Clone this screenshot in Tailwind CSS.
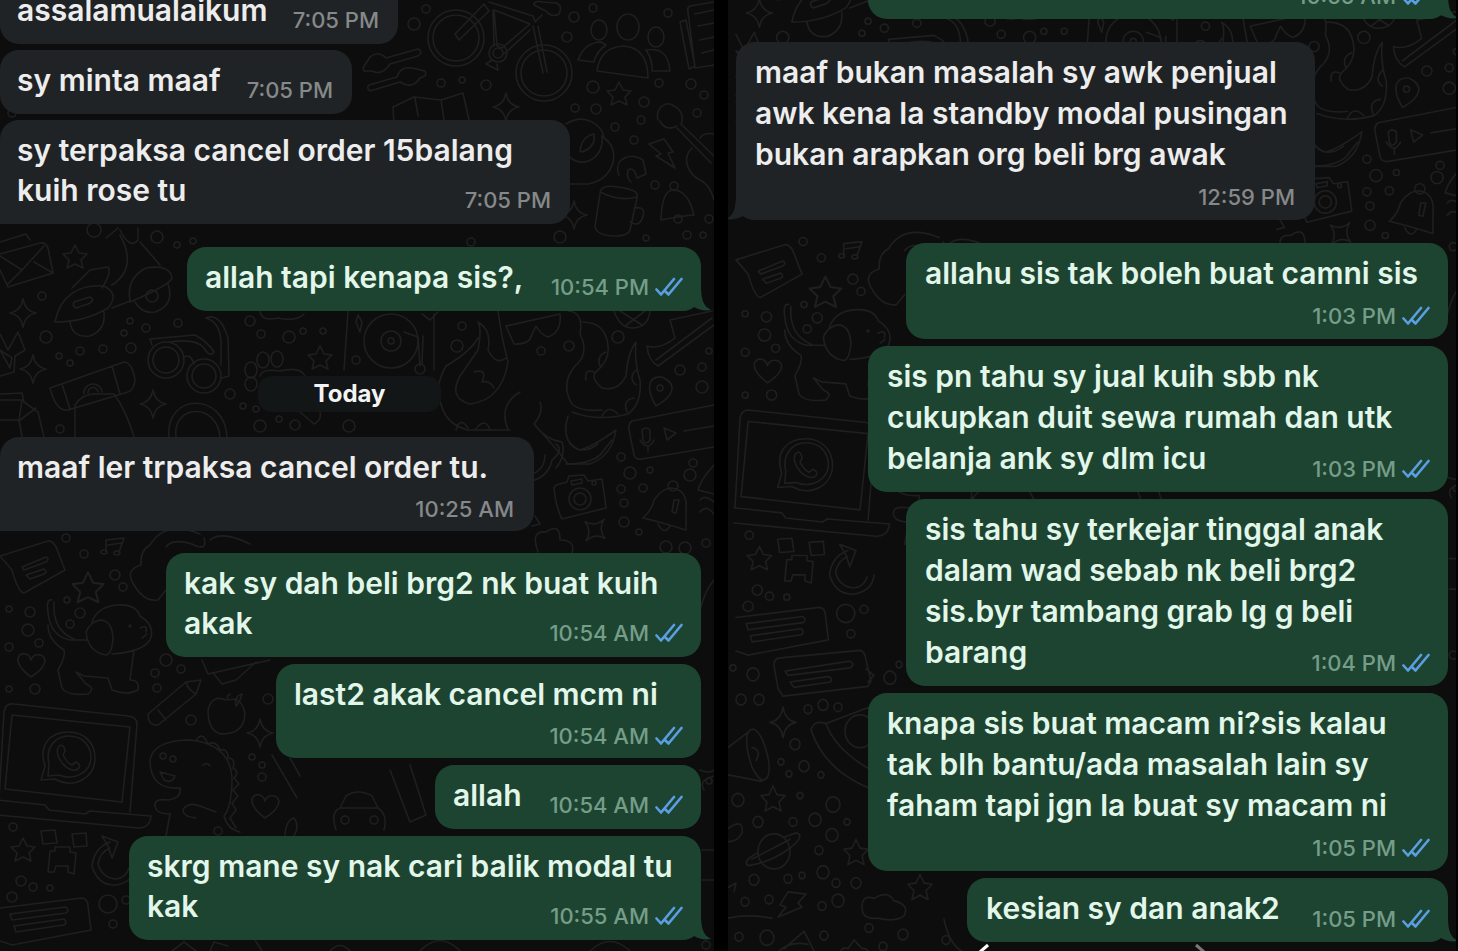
<!DOCTYPE html>
<html lang="ms">
<head>
<meta charset="utf-8">
<meta name="viewport" content="width=device-width, initial-scale=1">
<title>Chat</title>
<script src="https://cdn.jsdelivr.net/npm/@tailwindcss/browser@4"></script>
</head>
<body class="bg-black font-['Inter',sans-serif] font-semibold">

<!-- Shared drawings -->
<svg class="hidden" aria-hidden="true">
  <symbol id="ticks" viewBox="0 0 28 20">
    <path d="M1.5 12.5 L6 17.5 L19 2 M10.500 14.500 L13.500 17.500 L26.500 2" fill="none" stroke="#5b9fe3" stroke-width="2.600" stroke-linecap="round" stroke-linejoin="round"/>
  </symbol>
  <symbol id="tail-out" viewBox="0 0 30 26">
    <path d="M10 0 H20 C20 14 22 21 30 25 C24 26 18 25 13 22 C9 25 5 26 0 26 Z" fill="#1d4431"/>
  </symbol>
  <symbol id="tail-in" viewBox="0 0 30 26">
    <path d="M20 0 H10 C10 14 8 21 0 25 C6 26 12 25 17 22 C21 25 25 26 30 26 Z" fill="#202325"/>
  </symbol>
  <defs>
    <path id="star" d="M0 -12 L4 -4 L12 -3 L6 3 L8 11 L0 7 L-8 11 L-6 3 L-12 -3 L-4 -4 Z"/>
    <path id="spark" d="M0 -14 Q2 -2 13 0 Q2 2 0 14 Q-2 2 -13 0 Q-2 -2 0 -14 Z"/>
    <path id="heart" d="M0 12 C-8 6 -14 0 -13 -7 C-10 -14 -2 -12 0 -5 C2 -12 12 -12 14 -5 C14 1 8 7 0 12 Z"/>
    <g id="laptop">
      <path d="M-1 800 L4 712 Q5 703 14 704 L128 716 Q137 717 137 724 L130 812"/>
      <path d="M12 715 L130 727 L122 802 L5 789 Z"/>
      <path d="M-2 800 L45 805 L49 810 L85 814 L90 811 L151 816 Q150 828 138 828 L-2 815"/>
      <path d="M45 766 C38 745 50 732 69 732 C84 732 95 743 95 758 C95 777 75 790 55 779 L41 780 Z"/>
      <path d="M49 764 C45 748 55 736 69 736 C83 736 91 746 91 758 C90 773 74 781 59 775 L48 776 Z"/>
      <path d="M58 748 C60 744 64 744 65 751 L63 755 Q67 763 72 765 L76 762 Q82 765 78 769 C69 775 54 757 58 748 Z"/>
    </g>
    <g id="wallpaper" fill="none" stroke="#1f1f1f" stroke-width="1.600" stroke-linecap="round" stroke-linejoin="round">
      <!-- bicycle -->
      <circle cx="456" cy="38" r="28"/><circle cx="456" cy="38" r="23"/>
      <circle cx="544" cy="73" r="28"/><circle cx="544" cy="73" r="23"/>
      <path d="M455 34 L484 4 L489 11 L459 40 Z M489 2 L533 16 L535 22 L542 15 M494 10 L530 24 L502 48 L497 46 Z M530 30 L504 54 M493 10 L494 46 M533 26 L543 73 M538 26 L547 72 M534 5 Q534 0 543 2 L556 3 Q563 5 559 14 Q552 18 546 11 Z"/>
      <circle cx="498" cy="53" r="5"/><circle cx="498" cy="53" r="9"/><path d="M492 60 L486 64 L498 70 L497 64"/>
      <!-- people -->
      <ellipse cx="599" cy="30" rx="8" ry="10"/><ellipse cx="628" cy="27" rx="11" ry="13"/><ellipse cx="656" cy="37" rx="8" ry="10"/>
      <path d="M597 71 Q600 47 624 46 Q648 48 648 78 Z M578 60 Q585 42 601 42 L606 45 Q596 52 594 62 Z M646 50 Q668 46 670 71 L652 71 Q653 60 646 50 Z"/>
      <!-- notebook, sliders, folded map -->
      <path d="M714 2 L690 6 Q687 7 688 12 L695 68 L714 65 M680 22 L686 20 L695 66 L689 69 Z M695 14 L714 10 M698 26 L714 23 M700 40 L714 37 M702 53 L714 50"/>
      <path d="M363 68 L370 57 Q378 50 386 58 L418 49 Q424 52 418 56 L390 64 Q382 76 372 71 L364 71 Z M369 85 L397 77 Q400 66 412 68 L425 71 Q428 76 420 78 Q412 90 400 82 L370 91 Q366 88 369 85 Z"/>
      <path d="M394 125 L393 107 L414 97 L441 100 L463 93 L469 120 M415 98 L418 116 M441 100 L444 120"/>
      <!-- avocado, lightning, guitar, cashew, mug, bell -->
      <path d="M566 124 C585 112 602 125 604 138 C622 150 614 180 588 184 L566 184 M566 152 C578 172 605 160 602 136"/><path d="M580 151 Q582 136 594 134 Q596 147 582 152 Z"/>
      <path d="M649 144 L664 139 L673 152 L668 153 L675 168 L656 156 L661 154 Z"/>
      <path d="M658 120 C655 108 666 100 674 106 C682 110 684 118 681 124 L714 156 M677 128 L711 163 M660 121 Q666 132 677 126 M714 134 Q704 132 700 138 M692 148 C680 160 690 176 702 181 Q710 186 714 200"/>
      <path d="M619 175 C612 157 634 152 643 160 L646 174 L637 178 Q634 166 628 170 Q626 178 631 182 M600 192 Q602 184 618 187 Q640 190 637 197 Q620 202 600 192 M600 194 L595 226 Q596 236 616 236 Q628 236 630 230 L637 198 M634 208 Q646 206 643 216 Q640 228 630 222"/>
      <path d="M661 220 Q662 190 673 190 Q688 190 694 215 Q680 216 661 220 Z"/><circle cx="674" cy="186" r="4"/><circle cx="678" cy="219" r="4"/>
      <!-- envelope, scooter, rocket -->
      <path d="M0 254 L40 243 Q46 242 48 248 L53 273 L8 287 L0 270 M0 242 L26 234 L30 240 M0 256 L22 270 L44 246 M22 270 L8 284 M34 262 L53 273"/>
      <path d="M55 322 C60 295 80 284 104 286 Q120 294 108 308 Q85 322 55 322 Z M72 288 L90 270 L108 267 Q112 272 102 288 M74 302 L90 297 Q96 300 88 304 L76 308 Q72 306 74 302 Z M112 308 L130 301 Q126 278 146 268 Q170 264 172 278 Q170 285 130 302 M70 322 Q72 338 90 336 Q106 330 104 312 M168 284 Q175 305 155 312 Q142 314 135 302"/><circle cx="152" cy="296" r="6"/><path d="M120 235 Q138 268 112 285 M140 242 L160 265 M106 238 L118 228 M120 230 Q130 250 138 240 L138 228"/>
      <!-- sunglasses -->
      <circle cx="166" cy="360" r="18"/><circle cx="166" cy="360" r="13"/><circle cx="204" cy="376" r="17"/><circle cx="204" cy="376" r="12"/>
      <path d="M152 345 L150 339 L195 335 Q208 342 214 352 Q210 358 204 348 Q196 338 170 342 M183 358 Q190 352 194 364 M206 318 Q220 312 228 338 L229 376 L222 378 M206 318 Q220 322 221 342 L221 365"/>
      <!-- paw, cylinder, carton, reel -->
      <ellipse cx="251" cy="370" rx="6" ry="8"/><ellipse cx="263" cy="360" rx="6" ry="8"/><ellipse cx="277" cy="359" rx="6" ry="8"/><ellipse cx="251" cy="384" rx="6" ry="7"/><path d="M260 376 Q262 368 280 371 Q300 366 305 376"/>
      <path d="M50 388 L124 362 Q132 362 135 380 Q134 390 128 392 L68 410 Q56 412 50 388 Z M62 384 L70 409 M112 366 L120 394 M84 394 A9 9 0 1 1 102 392 M88 393 A5 5 0 1 1 98 392 M75 437 V405 Q80 396 92 394 L114 394 Q126 410 134 437 M0 394 L22 393 L24 402 L38 412 L44 437 M0 400 H22 L19 420 L22 437 M20 420 L36 408 M0 420 L18 420"/>
      <path d="M169 437 C165 392 225 392 227 437 M176 437 C172 404 217 402 220 437 M300 412 L314 424 Q322 420 320 412"/>
      <path d="M0 334 L8 350 L18 332 L25 350 L15 356 L14 372 L0 376 M0 350 L10 368 L12 358 Z"/>
      <!-- record player, tall screen -->
      <circle cx="391" cy="341" r="27"/><circle cx="391" cy="341" r="10"/><circle cx="391" cy="341" r="3"/><path d="M404 332 L418 337 L420 366 M423 336 L422 364"/><circle cx="420" cy="369" r="5"/>
      <path d="M348 311 L344 370 M434 314 V370 M358 315 L362 322 L360 332 L356 322 Z M260 311 Q262 322 278 318 Q296 322 304 314 M422 314 L430 320 L438 312"/>
      <!-- octopus wearing glasses -->
      <path d="M498 311 Q502 340 508 362 Q502 400 470 404 Q448 398 460 376 L478 350 Q482 328 478 322 Q492 330 488 350 Q496 366 506 358 M478 338 Q470 352 446 366 Q435 385 440 400 Q444 424 468 430 L510 430 M506 326 L560 314 Q562 332 548 337 Q540 334 536 326 L532 334 Q530 345 514 344 Z M568 311 Q584 312 580 334 Q590 354 575 366 Q560 384 572 404 Q580 412 602 410 M582 322 Q606 322 608 346 Q610 360 596 372 Q590 378 602 388 Q618 392 626 376 Q628 352 636 342 Q634 362 640 380 Q642 404 628 414 Q598 422 572 412 M568 416 Q560 442 580 450 Q594 446 616 430 Q612 456 590 464 L568 464 Q556 448 534 424 Q544 412 540 402 M520 392 Q498 405 508 430 M534 424 Q546 440 562 442 Q566 456 556 468 M456 430 Q460 416 468 428 M475 430 Q485 416 490 430 M474 372 Q488 368 482 382 Q490 380 494 388 M600 366 Q596 356 606 352 M586 380 Q584 368 594 372 M602 416 Q608 404 618 414 M636 385 Q628 378 636 370 M627 412 Q622 400 634 398"/>
      <!-- basketball, shoe, map pin, voice message -->
      <path d="M614 311 Q620 328 632 328 Q648 328 650 311 M620 311 L642 325 M645 311 L625 326 M670 320 L712 311 M670 320 L675 338 Q660 350 647 346 Q648 360 658 366 L714 325 M656 360 L712 318"/>
      <path d="M656 406 C644 386 650 376 662 377 C678 384 674 396 656 406 Z"/><circle cx="660" cy="388" r="3"/>
      <path d="M714 405 L632 421 Q628 424 629 430 L634 455 Q636 460 642 459 L714 447 M664 428 L676 433 L667 440 Z M684 431 L714 426 M642 430 Q646 426 650 430 L650 440 Q646 446 643 440 Z M640 440 Q648 452 654 440 M648 447 V452"/>
      <!-- camera, second bell, plants -->
      <path d="M556 485 L567 482 L569 476 L584 475 L588 481 L602 479 Q606 506 606 508 L562 519 Q556 508 554 488 Z M571 481 L582 479 V483 L572 485 Z"/><circle cx="580" cy="499" r="11"/><circle cx="580" cy="499" r="6"/><circle cx="594" cy="483" r="2"/>
      <path d="M643 518 Q652 510 654 500 Q662 488 672 488 Q688 490 686 510 L686 530 Q660 522 643 518 Z M674 500 L679 500 L676 513 L672 512 Z M658 524 Q664 536 670 526 M714 465 Q700 480 698 490 L714 494 M700 500 Q704 494 714 502 M700 512 Q706 504 714 514"/><circle cx="673" cy="486" r="5"/>
      <path d="M524 482 Q548 480 552 460 Q564 450 556 444 M530 475 Q545 470 545 455 M566 464 Q596 464 604 450 L612 440 M570 444 Q582 456 598 444 M538 552 Q530 530 546 532 Q560 522 560 540 Q576 540 572 553 M535 516 L540 524 L532 526"/>
      <!-- chat card, notes, koala -->
      <path d="M0 556 L48 541 Q54 540 58 552 L65 570 L24 593 Q18 592 12 570 Z M22 567 L46 557 Q50 559 46 562 L24 570 Z M26 575 L44 569 Q48 572 44 574 L30 579 Z"/>
      <path d="M106 552 V540 L124 538 L119 552 M108 545 L122 543"/><ellipse cx="104" cy="552" rx="3" ry="2"/><ellipse cx="117" cy="553" rx="3" ry="2"/>
      <path d="M166 547 Q172 538 192 544 Q208 552 204 538 M200 534 Q165 520 150 545 Q140 550 141 565 Q124 570 134 585 Q144 602 158 600 L166 590 M210 540 Q222 530 250 544"/>
      <!-- dog -->
      <path d="M52 600 Q46 598 48 612 Q50 636 70 640 L88 640 M54 602 Q52 630 74 639 M48 625 Q48 640 64 650 Q66 656 58 670 L62 688 Q66 696 88 694 Q96 688 86 684 L76 672 M76 672 L84 676 L108 678 L112 690 Q128 696 138 690 Q140 680 130 680 L134 650 M92 622 Q98 606 118 605 Q136 604 140 616 Q156 626 150 640 Q142 652 112 654 M100 620 Q112 620 113 638 Q112 654 106 655 Q88 652 86 632 Q90 622 100 620 Z M140 628 Q148 624 146 632 M142 638 L147 634"/><circle cx="130" cy="626" r="1"/>
      <!-- pencil, apple, photo -->
      <path d="M148 714 L186 682 L201 680 L196 694 L158 725 Q148 726 148 714 Z M158 710 L166 720 M186 682 Q188 690 196 694"/>
      <path d="M226 700 Q212 694 208 710 Q208 732 222 734 Q244 734 245 714 Q242 696 228 700 Q226 696 230 694 M236 706 Q234 696 242 694 Q240 702 236 706"/>
      <path d="M202 660 L208 674 L270 660 M214 674 L222 684 L236 680 L256 662"/>
      <use href="#laptop"/>
      <!-- dinosaur -->
      <path d="M166 836 L170 814 Q156 814 155 806 Q154 798 168 800 Q182 798 180 788 Q150 790 150 760 Q154 740 190 740 Q230 744 232 778 Q232 806 224 816 Q228 830 240 832 M196 741 Q202 730 208 744 Q216 740 220 750 Q228 748 228 758 Q236 758 233 768 Q240 772 234 778 L239 784 L233 790 L238 796 L232 803 L236 810 L230 818 L236 828 M160 772 L175 776 Q172 784 164 780 Z M196 818 Q180 816 184 808 Q190 802 200 806 L216 812 M203 765 Q208 762 210 766"/><circle cx="163" cy="756" r="3"/><circle cx="173" cy="759" r="3"/>
      <path d="M272 755 L297 798 M290 758 L300 776 M285 835 Q286 820 294 818 Q300 826 294 836 M336 830 Q330 812 340 808 L346 796 Q358 788 372 796 L378 808 Q388 814 384 830 M340 808 H378 M390 770 L410 822 L426 815 L410 765"/><circle cx="345" cy="820" r="4"/><circle cx="374" cy="820" r="4"/>
      <!-- pixel figure, refresh arrow, speech card -->
      <path d="M41 831 L55 830 L57 843 L43 844 Z M72 834 L86 833 L87 846 L74 847 Z M50 851 L55 851 V847 H70 V852 L76 853 L74 874 L68 872 V866 L56 866 L54 872 L48 872 Z"/>
      <path d="M110 842 Q94 848 92 866 Q98 886 116 885 Q134 882 136 866 M110 848 Q100 852 98 864 Q102 878 116 879 Q126 878 129 868 M102 836 L118 842 L112 858 L108 846 Z"/>
      <path d="M0 908 L82 898 Q88 899 88 906 L91 930 L12 945 L0 941 M10 914 L66 907 Q70 911 66 913 L12 920 Z M14 926 L64 919 Q68 922 64 925 L16 932 Z"/>
      <path d="M172 951 L184 942 L196 951 M210 951 L214 942 L228 946 M262 951 L255 940 M330 951 Q340 940 350 951 M420 951 Q440 930 460 951 M590 951 Q610 932 630 951 M700 770 Q710 774 714 770 M704 790 Q698 780 714 776 M702 850 H714 M702 880 H714 M700 610 Q705 590 714 580"/>
      <!-- stars, hearts, sparkles -->
      <use href="#star" x="619" y="94"/><use href="#star" x="75" y="257"/><use href="#star" x="320" y="358"/><use href="#star" x="23" y="850"/>
      <g transform="translate(88 588) scale(1.300)"><use href="#star"/></g>
      <use href="#heart" x="31" y="665"/><use href="#heart" x="265" y="806"/>
      <use href="#spark" x="23" y="313"/><use href="#spark" x="506" y="107"/><use href="#spark" x="33" y="369"/><use href="#spark" x="153" y="404"/><use href="#spark" x="260" y="733"/><use href="#spark" x="574" y="215"/>
      <g transform="translate(595 530) rotate(40)"><use href="#spark"/></g>
      <!-- bubbles scattered between the drawings -->
      <circle cx="414" cy="24" r="6"/><circle cx="426" cy="9" r="4"/><circle cx="486" cy="85" r="5"/><circle cx="441" cy="83" r="4"/><circle cx="462" cy="80" r="3"/><circle cx="574" cy="17" r="5"/><circle cx="567" cy="37" r="5"/><circle cx="593" cy="8" r="4"/><circle cx="668" cy="13" r="4"/><circle cx="593" cy="87" r="6"/><circle cx="659" cy="83" r="4"/><circle cx="691" cy="84" r="5"/><circle cx="704" cy="95" r="4"/><circle cx="644" cy="102" r="5"/><circle cx="596" cy="109" r="5"/><circle cx="575" cy="108" r="4"/><circle cx="641" cy="120" r="4"/><circle cx="697" cy="113" r="4"/><circle cx="615" cy="127" r="4"/><circle cx="634" cy="140" r="4"/><circle cx="655" cy="185" r="4"/><circle cx="709" cy="219" r="4"/><circle cx="687" cy="235" r="4"/><circle cx="560" cy="237" r="6"/><circle cx="703" cy="235" r="3"/><circle cx="646" cy="238" r="3"/><circle cx="471" cy="242" r="4"/><circle cx="12" cy="113" r="4"/>
      <circle cx="94" cy="230" r="7"/><circle cx="157" cy="237" r="6"/><circle cx="177" cy="245" r="3"/><circle cx="193" cy="241" r="3"/><circle cx="42" cy="296" r="4"/><circle cx="46" cy="337" r="6"/><circle cx="130" cy="321" r="3"/><circle cx="146" cy="328" r="4"/><circle cx="124" cy="333" r="3"/><circle cx="178" cy="323" r="4"/><circle cx="131" cy="348" r="5"/><circle cx="103" cy="349" r="4"/><circle cx="80" cy="351" r="4"/><circle cx="59" cy="356" r="3"/><circle cx="70" cy="363" r="3"/><circle cx="250" cy="321" r="5"/><circle cx="289" cy="337" r="6"/><circle cx="261" cy="334" r="4"/><circle cx="303" cy="331" r="3"/><circle cx="323" cy="331" r="3"/><circle cx="356" cy="360" r="4"/><circle cx="230" cy="394" r="5"/><circle cx="243" cy="406" r="3"/><circle cx="256" cy="409" r="3"/><circle cx="260" cy="426" r="6"/><circle cx="279" cy="419" r="3"/><circle cx="295" cy="425" r="5"/><circle cx="349" cy="426" r="6"/><circle cx="60" cy="429" r="4"/><circle cx="462" cy="326" r="4"/><circle cx="457" cy="346" r="6"/><circle cx="618" cy="337" r="6"/><circle cx="569" cy="346" r="5"/><circle cx="541" cy="351" r="4"/><circle cx="680" cy="370" r="5"/><circle cx="702" cy="367" r="4"/><circle cx="702" cy="387" r="6"/><circle cx="709" cy="351" r="3"/><circle cx="621" cy="457" r="4"/><circle cx="693" cy="463" r="4"/><circle cx="630" cy="473" r="6"/><circle cx="650" cy="470" r="3"/><circle cx="690" cy="475" r="6"/><circle cx="621" cy="489" r="4"/><circle cx="643" cy="488" r="4"/><circle cx="624" cy="503" r="4"/><circle cx="624" cy="522" r="5"/><circle cx="639" cy="532" r="3"/><circle cx="666" cy="547" r="6"/><circle cx="685" cy="548" r="6"/><circle cx="706" cy="543" r="4"/>
      <circle cx="66" cy="538" r="4"/><circle cx="84" cy="554" r="4"/><circle cx="115" cy="575" r="5"/><circle cx="123" cy="587" r="4"/><circle cx="67" cy="600" r="3"/><circle cx="9" cy="609" r="3"/><circle cx="30" cy="612" r="5"/><circle cx="80" cy="613" r="5"/><circle cx="70" cy="624" r="4"/><circle cx="28" cy="630" r="6"/><circle cx="39" cy="643" r="4"/><circle cx="9" cy="647" r="4"/><circle cx="9" cy="689" r="3"/><circle cx="35" cy="689" r="5"/><circle cx="166" cy="660" r="6"/><circle cx="155" cy="673" r="4"/><circle cx="181" cy="669" r="4"/><circle cx="157" cy="688" r="4"/><circle cx="191" cy="720" r="5"/><circle cx="268" cy="699" r="5"/><circle cx="252" cy="757" r="3"/><circle cx="262" cy="765" r="3"/><circle cx="262" cy="777" r="4"/><circle cx="13" cy="827" r="4"/><circle cx="21" cy="881" r="5"/><circle cx="33" cy="887" r="4"/><circle cx="50" cy="888" r="3"/><circle cx="12" cy="897" r="5"/><circle cx="108" cy="904" r="9"/><circle cx="113" cy="924" r="4"/><circle cx="126" cy="900" r="4"/><circle cx="218" cy="831" r="4"/><circle cx="709" cy="781" r="3"/><circle cx="706" cy="945" r="4"/>
    </g>
    <!-- lower part of the wallpaper, seen only where it is scrolled further -->
    <g id="wallpaper-low" fill="none" stroke="#1f1f1f" stroke-width="1.600" stroke-linecap="round" stroke-linejoin="round">
      <path d="M46 641 Q46 634 52 634 L132 627 Q137 628 138 636 L143 655 L140 660 L55 669 L50 662 Z M57 646 L122 637 Q128 640 122 643 L60 650 Z M62 656 L100 651 Q106 653 102 656 L66 661 Z M138 644 L146 650 L140 656"/>
      <path d="M20 702 Q26 694 34 708 Q44 730 40 742 Q34 752 24 734 Q16 712 20 702 Z M20 702 L0 716 M34 747 L0 741 M24 716 Q34 718 28 728"/>
      <path d="M83 700 Q86 690 98 694 Q108 720 150 740 M83 700 Q98 740 150 756 M98 694 L150 676"/><circle cx="132" cy="701" r="15"/>
      <circle cx="46" cy="811" r="16"/><path d="M30 812 Q14 820 20 824 Q40 822 62 808 Q78 796 68 794 L56 798 M24 818 L62 800"/>
      <path d="M60 848 L78 850 L70 858 L74 862 L50 871 L58 862 L52 860 Z M0 872 Q20 868 44 872 M134 862 Q134 850 146 854 Q160 846 166 856 Q182 860 176 870 Q166 876 150 872 Q134 874 134 862 Z M56 900 L76 884 L86 902 M48 905 Q60 892 80 896 M110 912 Q112 896 120 900 L126 892 L134 900 Q142 898 142 912 M0 790 Q16 780 14 794 Q10 802 0 802 M0 844 L8 840 L6 848"/>
      <path d="M216 873 Q222 900 240 905 M228 911 Q214 930 240 935"/>
      <use href="#star" x="45" y="763"/><use href="#star" x="128" y="812"/><use href="#star" x="192" y="844"/><use href="#spark" x="55" y="693"/>
      <circle cx="5" cy="643" r="3"/><circle cx="25" cy="649" r="6"/><circle cx="13" cy="672" r="5"/><circle cx="31" cy="672" r="5"/><circle cx="80" cy="681" r="4"/><circle cx="95" cy="677" r="5"/><circle cx="110" cy="679" r="4"/><circle cx="162" cy="652" r="6"/><circle cx="171" cy="640" r="3"/><circle cx="67" cy="713" r="5"/><circle cx="53" cy="729" r="3"/><circle cx="76" cy="733" r="5"/><circle cx="61" cy="740" r="3"/><circle cx="93" cy="741" r="3"/><circle cx="10" cy="764" r="6"/><circle cx="72" cy="760" r="3"/><circle cx="105" cy="768" r="7"/><circle cx="30" cy="784" r="5"/><circle cx="65" cy="784" r="4"/><circle cx="87" cy="782" r="6"/><circle cx="119" cy="784" r="3"/><circle cx="104" cy="796" r="6"/><circle cx="91" cy="810" r="4"/><circle cx="95" cy="830" r="6"/><circle cx="26" cy="837" r="5"/><circle cx="60" cy="836" r="4"/><circle cx="74" cy="833" r="3"/><circle cx="108" cy="840" r="4"/><circle cx="128" cy="840" r="5"/><circle cx="17" cy="857" r="4"/><circle cx="41" cy="855" r="4"/><circle cx="94" cy="861" r="4"/><circle cx="110" cy="856" r="6"/><circle cx="11" cy="889" r="4"/><circle cx="39" cy="890" r="7"/><circle cx="96" cy="888" r="4"/><circle cx="141" cy="881" r="4"/><circle cx="175" cy="887" r="5"/><circle cx="155" cy="898" r="4"/><circle cx="218" cy="892" r="4"/>
    </g>
  </defs>
</svg>

<main class="flex h-screen overflow-hidden pr-0.5">

  <!-- Earlier part of the chat -->
  <section class="relative h-full flex-[714] overflow-hidden bg-[#0d0d0d]">
    <svg class="absolute inset-0 h-full w-full" aria-hidden="true"><use href="#wallpaper"/></svg>
    <div class="relative -mt-5 flex flex-col pr-[13px] text-[30px] leading-10">
      <div class="flex flex-col gap-1.5 text-[#ededed]">
        <article class="grid w-[398px] rounded-r-[19px] rounded-bl-[19px] bg-[#202325] pt-2.5 pr-[19px] pb-3.5 pl-[17px]">
          <p class="col-start-1 row-start-1">assalamualaikum</p>
          <time class="col-start-1 row-start-1 -mb-1 self-end justify-self-end text-[22px] leading-7 font-medium text-[#85898a]">7:05 PM</time>
        </article>
        <article class="grid w-[352px] rounded-[19px] bg-[#202325] pt-2.5 pr-[19px] pb-3.5 pl-[17px]">
          <p class="col-start-1 row-start-1">sy minta maaf</p>
          <time class="col-start-1 row-start-1 -mb-1 self-end justify-self-end text-[22px] leading-7 font-medium text-[#85898a]">7:05 PM</time>
        </article>
        <article class="grid w-[570px] rounded-r-[19px] rounded-tl-[19px] bg-[#202325] pt-2.5 pr-[19px] pb-3.5 pl-[17px]">
          <p class="col-start-1 row-start-1">sy terpaksa cancel order 15balang<br>kuih rose tu</p>
          <time class="col-start-1 row-start-1 -mb-1 self-end justify-self-end text-[22px] leading-7 font-medium text-[#85898a]">7:05 PM</time>
        </article>
      </div>
      <article class="relative mt-[23px] grid w-[514px] self-end rounded-[19px] bg-[#1d4431] pt-2.5 pr-[18px] pb-3.5 pl-[18px] text-[#e2f6ea]">
        <p class="col-start-1 row-start-1">allah tapi kenapa sis?,</p>
        <div class="col-start-1 row-start-1 -mb-1 flex items-center gap-1.5 self-end justify-self-end text-[22px] leading-7 font-medium text-[#759d88]"><time>10:54 PM</time><svg class="h-5 w-7" aria-label="Read"><use href="#ticks"/></svg></div>
        <svg class="absolute -right-2.5 bottom-0 h-[26px] w-[30px]" aria-hidden="true"><use href="#tail-out"/></svg>
      </article>
      <h2 class="mt-[65px] ml-[258px] w-[183px] rounded-[14px] bg-[#131616] text-center text-2xl leading-9 font-bold text-[#f4f4f4]">Today</h2>
      <article class="mt-[25px] grid w-[534px] rounded-r-[19px] rounded-tl-[19px] bg-[#202325] pt-2.5 pr-5 pb-2 pl-[17px] text-[#ededed]">
        <p>maaf ler trpaksa cancel order tu.</p>
        <time class="mt-2 justify-self-end text-[22px] leading-7 font-medium text-[#85898a]">10:25 AM</time>
      </article>
      <div class="mt-[22px] flex flex-col items-end gap-[7px] text-[#e2f6ea]">
        <article class="grid w-[535px] rounded-[19px] bg-[#1d4431] pt-2.5 pr-[18px] pb-3.5 pl-[18px]">
          <p class="col-start-1 row-start-1">kak sy dah beli brg2 nk buat kuih<br>akak</p>
          <div class="col-start-1 row-start-1 -mb-1 flex items-center gap-1.5 self-end justify-self-end text-[22px] leading-7 font-medium text-[#759d88]"><time>10:54 AM</time><svg class="h-5 w-7" aria-label="Read"><use href="#ticks"/></svg></div>
        </article>
        <article class="grid w-[425px] rounded-[19px] bg-[#1d4431] pt-2.5 pr-[18px] pb-2 pl-[18px]">
          <p>last2 akak cancel mcm ni</p>
          <div class="mt-2 flex items-center gap-1.5 justify-self-end text-[22px] leading-7 font-medium text-[#759d88]"><time>10:54 AM</time><svg class="h-5 w-7" aria-label="Read"><use href="#ticks"/></svg></div>
        </article>
        <article class="grid w-[266px] rounded-[19px] bg-[#1d4431] pt-2.5 pr-[18px] pb-3.5 pl-[18px]">
          <p class="col-start-1 row-start-1">allah</p>
          <div class="col-start-1 row-start-1 -mb-1 flex items-center gap-1.5 self-end justify-self-end text-[22px] leading-7 font-medium text-[#759d88]"><time>10:54 AM</time><svg class="h-5 w-7" aria-label="Read"><use href="#ticks"/></svg></div>
        </article>
        <article class="relative grid w-[572px] rounded-[19px] bg-[#1d4431] pt-2.5 pr-[18px] pb-3.5 pl-[18px]">
          <p class="col-start-1 row-start-1">skrg mane sy nak cari balik modal tu<br>kak</p>
          <div class="col-start-1 row-start-1 -mb-1 flex items-center gap-1.5 self-end justify-self-end text-[22px] leading-7 font-medium text-[#759d88]"><time>10:55 AM</time><svg class="h-5 w-7" aria-label="Read"><use href="#ticks"/></svg></div>
          <svg class="absolute -right-2.5 bottom-0 h-[26px] w-[30px]" aria-hidden="true"><use href="#tail-out"/></svg>
        </article>
      </div>
    </div>
  </section>

  <div class="w-3.5 shrink-0 bg-black"></div>

  <!-- Later part of the chat -->
  <section class="relative h-full flex-[728] overflow-hidden bg-[#0d0d0d]">
    <svg class="absolute inset-0 h-full w-full" aria-hidden="true"><use href="#wallpaper" transform="translate(8 -305) scale(1.016)"/><use href="#wallpaper-low" transform="translate(0 -35) scale(1 1.093)"/></svg>
    <div class="relative -mt-[45px] flex flex-col gap-[7px] pr-2 text-[30px] leading-[41px]">
      <article class="relative grid h-16 w-[580px] self-end rounded-[19px] bg-[#1d4431] pt-2.5 pr-[18px] pb-[13px] pl-[19px]">
        <div class="col-start-1 row-start-1 -mb-1 flex items-center gap-1.5 self-end justify-self-end text-[22px] leading-7 font-medium text-[#759d88]"><time>10:55 AM</time><svg class="h-5 w-7" aria-label="Read"><use href="#ticks"/></svg></div>
        <svg class="absolute -right-2.5 bottom-0 h-[26px] w-[30px]" aria-hidden="true"><use href="#tail-out"/></svg>
      </article>
      <article class="relative mt-4 ml-2 grid w-[579px] rounded-[19px] bg-[#202325] pt-2.5 pr-5 pb-[9px] pl-[19px] text-[#ededed]">
        <p>maaf bukan masalah sy awk penjual<br>awk kena la standby modal pusingan<br>bukan arapkan org beli brg awak</p>
        <time class="mt-2 justify-self-end text-[22px] leading-7 font-medium text-[#85898a]">12:59 PM</time>
        <svg class="absolute bottom-0 -left-2.5 h-[26px] w-[30px]" aria-hidden="true"><use href="#tail-in"/></svg>
      </article>
      <article class="mt-4 grid w-[542px] self-end rounded-[19px] bg-[#1d4431] pt-2.5 pr-[18px] pb-[9px] pl-[19px] text-[#e2f6ea]">
        <p>allahu sis tak boleh buat camni sis</p>
        <div class="mt-2 flex items-center gap-1.5 justify-self-end text-[22px] leading-7 font-medium text-[#759d88]"><time>1:03 PM</time><svg class="h-5 w-7" aria-label="Read"><use href="#ticks"/></svg></div>
      </article>
      <article class="grid w-[580px] self-end rounded-[19px] bg-[#1d4431] pt-2.5 pr-[18px] pb-[13px] pl-[19px] text-[#e2f6ea]">
        <p class="col-start-1 row-start-1">sis pn tahu sy jual kuih sbb nk<br>cukupkan duit sewa rumah dan utk<br>belanja ank sy dlm icu</p>
        <div class="col-start-1 row-start-1 -mb-1 flex items-center gap-1.5 self-end justify-self-end text-[22px] leading-7 font-medium text-[#759d88]"><time>1:03 PM</time><svg class="h-5 w-7" aria-label="Read"><use href="#ticks"/></svg></div>
      </article>
      <article class="grid w-[542px] self-end rounded-[19px] bg-[#1d4431] pt-2.5 pr-[18px] pb-[13px] pl-[19px] text-[#e2f6ea]">
        <p class="col-start-1 row-start-1">sis tahu sy terkejar tinggal anak<br>dalam wad sebab nk beli brg2<br>sis.byr tambang grab lg g beli<br>barang</p>
        <div class="col-start-1 row-start-1 -mb-1 flex items-center gap-1.5 self-end justify-self-end text-[22px] leading-7 font-medium text-[#759d88]"><time>1:04 PM</time><svg class="h-5 w-7" aria-label="Read"><use href="#ticks"/></svg></div>
      </article>
      <article class="grid w-[580px] self-end rounded-[19px] bg-[#1d4431] pt-2.5 pr-[18px] pb-[9px] pl-[19px] text-[#e2f6ea]">
        <p>knapa sis buat macam ni?sis kalau<br>tak blh bantu/ada masalah lain sy<br>faham tapi jgn la buat sy macam ni</p>
        <div class="mt-2 flex items-center gap-1.5 justify-self-end text-[22px] leading-7 font-medium text-[#759d88]"><time>1:05 PM</time><svg class="h-5 w-7" aria-label="Read"><use href="#ticks"/></svg></div>
      </article>
      <article class="relative grid w-[481px] self-end rounded-[19px] bg-[#1d4431] pt-2.5 pr-[18px] pb-[13px] pl-[19px] text-[#e2f6ea]">
        <p class="col-start-1 row-start-1">kesian sy dan anak2</p>
        <div class="col-start-1 row-start-1 -mb-1 flex items-center gap-1.5 self-end justify-self-end text-[22px] leading-7 font-medium text-[#759d88]"><time>1:05 PM</time><svg class="h-5 w-7" aria-label="Read"><use href="#ticks"/></svg></div>
        <svg class="absolute -right-2.5 bottom-0 h-[26px] w-[30px]" aria-hidden="true"><use href="#tail-out"/></svg>
      </article>
    </div>
    <!-- Tops of the viewer's previous and next arrows -->
    <svg class="absolute bottom-0 left-[250px] h-2 w-60" fill="none" stroke-width="3" aria-hidden="true"><path d="M10 2 L2 9" stroke="#fff"/><path d="M218 2 L226 9" stroke="#777"/></svg>
  </section>
</main>
</body>
</html>
